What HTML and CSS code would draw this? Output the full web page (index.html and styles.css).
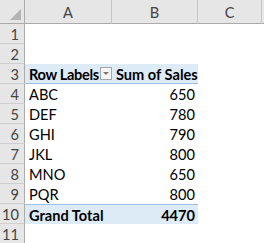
FILE: index.html
```html
<!DOCTYPE html>
<html>
<head>
<meta charset="utf-8">
<link rel="stylesheet" href="styles.css">
</head>
<body>
<div class="sheet">
  <div class="corner"><span class="tri"></span></div>
  <div class="colh">A</div>
  <div class="colh">B</div>
  <div class="colh">C</div>
  <div class="colh last"></div>

  <div class="rowh">1</div><div class="cell"></div><div class="cell"></div><div class="cell"></div><div class="cell"></div>
  <div class="rowh">2</div><div class="cell"></div><div class="cell"></div><div class="cell"></div><div class="cell"></div>
  <div class="rowh">3</div>
  <div class="cell head bold labelcell"><span class="tight">Row Labels</span><span class="dd"><span class="ddtri"></span></span></div>
  <div class="cell head bold">Sum of Sales</div>
  <div class="cell"></div><div class="cell"></div>
  <div class="rowh">4</div><div class="cell">ABC</div><div class="cell num">650</div><div class="cell"></div><div class="cell"></div>
  <div class="rowh">5</div><div class="cell">DEF</div><div class="cell num">780</div><div class="cell"></div><div class="cell"></div>
  <div class="rowh">6</div><div class="cell">GHI</div><div class="cell num">790</div><div class="cell"></div><div class="cell"></div>
  <div class="rowh">7</div><div class="cell">JKL</div><div class="cell num">800</div><div class="cell"></div><div class="cell"></div>
  <div class="rowh">8</div><div class="cell">MNO</div><div class="cell num">650</div><div class="cell"></div><div class="cell"></div>
  <div class="rowh">9</div><div class="cell">PQR</div><div class="cell num">800</div><div class="cell"></div><div class="cell"></div>
  <div class="rowh">10</div><div class="cell total bold">Grand Total</div><div class="cell total bold num">4470</div><div class="cell"></div><div class="cell"></div>
  <div class="rowh">11</div><div class="cell"></div><div class="cell"></div><div class="cell"></div><div class="cell"></div>
</div>
</body>
</html>
```
FILE: styles.css
```css
html, body {
  margin: 0;
  padding: 0;
  background: #ffffff;
}
.sheet {
  display: grid;
  grid-template-columns: 25px 87px 86px 64px 10px;
  grid-template-rows: 24px repeat(11, 20px);
  font-family: Lato, "Noto Sans", sans-serif;
  font-size: 14.6px;
  color: #000;
  width: 264px;
  overflow: hidden;
}
.corner {
  background: #e6e6e6;
  border-right: 1px solid #ababab;
  border-bottom: 1px solid #ababab;
  position: relative;
}
.tri {
  position: absolute;
  right: 3px;
  bottom: 3px;
  width: 0;
  height: 0;
  border-left: 11px solid transparent;
  border-bottom: 11px solid #b4b4b4;
}
.colh {
  background: #e6e6e6;
  border-right: 1px solid #c6c6c6;
  border-bottom: 1px solid #ababab;
  display: flex;
  align-items: center;
  justify-content: center;
  color: #444;
  padding-top: 2px;
}
.rowh {
  background: #e6e6e6;
  border-right: 1px solid #ababab;
  border-bottom: 1px solid #cfcfcf;
  color: #444;
  display: flex;
  align-items: center;
  justify-content: flex-end;
  padding-right: 5px;
  padding-top: 1px;
}
.cell {
  display: flex;
  align-items: center;
  padding: 1px 3px 0 4px;
  white-space: nowrap;
  position: relative;
}
.num {
  justify-content: flex-end;
}
.bold {
  font-weight: 700;
}
.head {
  background: #ddebf7;
  border-bottom: 1px solid #9bc2e6;
}
.total {
  background: #ddebf7;
  border-top: 1px solid #9bc2e6;
}
.labelcell {
  padding-right: 5px;
  gap: 1px;
}
.tight {
  letter-spacing: -0.35px;
}
.dd {
  flex: 0 0 auto;
  width: 12px;
  height: 13px;
  margin-left: auto;
  margin-top: -1px;
  box-sizing: border-box;
  border: 1px solid #a6a6a6;
  background: #f6f6f6;
  display: flex;
  align-items: center;
  justify-content: center;
}
.ddtri {
  width: 0;
  height: 0;
  border-left: 3.5px solid transparent;
  border-right: 3.5px solid transparent;
  border-top: 3.5px solid #7a7a7a;
}
```
